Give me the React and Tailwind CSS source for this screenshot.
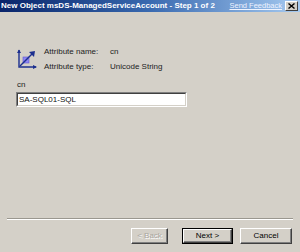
import React from "react";

function AttrIcon() {
  return (
    <svg width="22" height="22" viewBox="0 0 22 22">
      {/* axes */}
      <path d="M3 2 L3 19 L20 19" fill="none" stroke="#1c2f8f" strokeWidth="1.4" />
      <path d="M1 5 L3 1.5 L5 5 Z" fill="#1c2f8f" />
      <path d="M17 17 L21 19 L17 21 Z" fill="#1c2f8f" />
      {/* square */}
      <rect x="7" y="9" width="6" height="6" fill="#8f86f2" stroke="#5d55d0" strokeWidth="0.6" />
      {/* diagonal arrow */}
      <path d="M4 18 L17 5" stroke="#1c2f8f" strokeWidth="1.4" />
      <path d="M13 4 L19 3 L18 9 Z" fill="#1c2f8f" />
    </svg>
  );
}

function Btn({ children, disabled, primary }) {
  const inner = (
    <div className="w-full h-full flex items-center justify-center border border-t-white border-l-white border-b-[#404040] border-r-[#404040] shadow-[inset_-1px_-1px_0_#808080]">
      <span className={disabled ? "text-[#a9a69e] [text-shadow:1px_1px_0_#fff]" : "text-black"}>{children}</span>
    </div>
  );
  return (
    <div className={`h-[16px] text-[8px] ${primary ? "w-[51px] border border-black" : disabled ? "w-[37px]" : "w-[52px]"}`}>
      {inner}
    </div>
  );
}

export default function App() {
  return (
    <div
      className="w-[300px] h-[252px] flex flex-col bg-[#d4d0c8] overflow-hidden"
      style={{ fontFamily: '"Liberation Sans", Arial, sans-serif' }}
    >
      {/* Title bar */}
      <div className="h-[12px] flex items-center bg-gradient-to-r from-[#0a246a] via-[#3a6ab0] to-[#a6caf0] pl-[1px] pr-[2px]">
        <span className="text-white font-bold text-[8px] leading-none whitespace-nowrap">
          New Object msDS-ManagedServiceAccount - Step 1 of 2
        </span>
        <span className="ml-auto text-[7.5px] leading-none text-[#eef3ff] underline whitespace-nowrap">Send Feedback</span>
        <div className="ml-[3px] w-[13px] h-[10px] bg-[#d4d0c8] border border-t-white border-l-white border-b-[#404040] border-r-[#404040] flex items-center justify-center">
          <svg width="7" height="6" viewBox="0 0 7 6">
            <path d="M0.5 0.5 L6.5 5.5 M6.5 0.5 L0.5 5.5" stroke="#000" strokeWidth="1.4" />
          </svg>
        </div>
      </div>

      {/* Body */}
      <div className="flex-1 flex flex-col px-[16px] pt-[35px]">
        <div className="flex items-center gap-[6px]">
          <AttrIcon />
          <div className="grid grid-cols-[66px_auto] gap-y-[6px] text-[8px] leading-[9px] text-[#222]">
            <span>Attribute name:</span>
            <span>cn</span>
            <span>Attribute type:</span>
            <span>Unicode String</span>
          </div>
        </div>
        <div className="mt-[9px] text-[8px] leading-[9px] text-[#222] pl-[1px]">cn</div>
        <div className="mt-[3px] w-[171px] h-[15px] border border-t-[#808080] border-l-[#808080] border-b-white border-r-white">
          <div className="w-full h-full bg-white border border-t-[#404040] border-l-[#404040] border-b-[#d4d0c8] border-r-[#d4d0c8] flex items-center pl-[1px] text-[8px] text-[#111]">
            SA-SQL01-SQL
          </div>
        </div>
      </div>

      {/* Footer */}
      <div className="mx-[7px] border-t border-t-[#9a978f] border-b border-b-white" />
      <div className="flex justify-end items-center pr-[8px] pt-[8px] pb-[8px]">
        <Btn disabled>&lt; Back</Btn>
        <div className="w-[14px]" />
        <Btn primary>Next &gt;</Btn>
        <div className="w-[7px]" />
        <Btn>Cancel</Btn>
      </div>
    </div>
  );
}
